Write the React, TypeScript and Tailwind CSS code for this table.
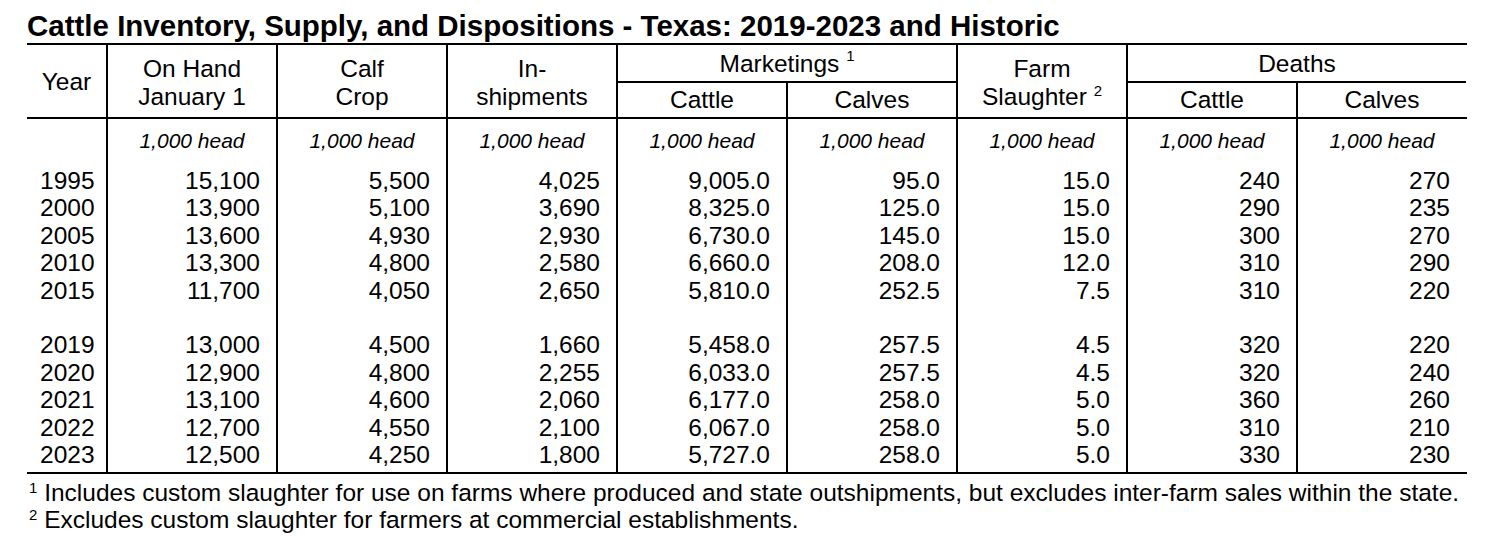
import React from "react";

const grid = "grid w-[1440px] grid-cols-[79px_repeat(8,170px)]";

type Row = [string, string, string, string, string, string, string, string, string] | null;

const rows: Row[] = [
  ["1995", "15,100", "5,500", "4,025", "9,005.0", "95.0", "15.0", "240", "270"],
  ["2000", "13,900", "5,100", "3,690", "8,325.0", "125.0", "15.0", "290", "235"],
  ["2005", "13,600", "4,930", "2,930", "6,730.0", "145.0", "15.0", "300", "270"],
  ["2010", "13,300", "4,800", "2,580", "6,660.0", "208.0", "12.0", "310", "290"],
  ["2015", "11,700", "4,050", "2,650", "5,810.0", "252.5", "7.5", "310", "220"],
  null,
  ["2019", "13,000", "4,500", "1,660", "5,458.0", "257.5", "4.5", "320", "220"],
  ["2020", "12,900", "4,800", "2,255", "6,033.0", "257.5", "4.5", "320", "240"],
  ["2021", "13,100", "4,600", "2,060", "6,177.0", "258.0", "5.0", "360", "260"],
  ["2022", "12,700", "4,550", "2,100", "6,067.0", "258.0", "5.0", "310", "210"],
  ["2023", "12,500", "4,250", "1,800", "5,727.0", "258.0", "5.0", "330", "230"],
];

function TwoLine({ top, bottom }: { top: React.ReactNode; bottom: React.ReactNode }) {
  return (
    <div className="row-span-2 flex flex-col items-center justify-center border-l-2 border-black pt-[3px] leading-[28px]">
      <span>{top}</span>
      <span>{bottom}</span>
    </div>
  );
}

export default function App() {
  return (
    <div className="min-h-[550px] w-[1496px] bg-white pl-[27px] font-['Liberation_Sans',Arial,sans-serif] text-[24.5px] text-black">
      <h1 className="pt-[9px] text-[29.5px] font-bold leading-[34px]">
        Cattle Inventory, Supply, and Dispositions - Texas: 2019-2023 and Historic
      </h1>

      {/* Column headings */}
      <div className={`${grid} grid-rows-[38px_34px] border-y-2 border-black`}>
        <div className="row-span-2 flex items-center justify-center pt-[2px]">Year</div>
        <TwoLine top="On Hand" bottom="January 1" />
        <TwoLine top="Calf" bottom="Crop" />
        <TwoLine top="In-" bottom="shipments" />
        <div className="col-span-2 flex items-center justify-center border-b-2 border-l-2 border-black pt-[3px]">
          Marketings&nbsp;<sup className="top-[-0.6em] text-[15px]">1</sup>
        </div>
        <TwoLine
          top="Farm"
          bottom={
            <>
              Slaughter <sup className="top-[-0.6em] text-[15px]">2</sup>
            </>
          }
        />
        <div className="col-span-2 flex items-center justify-center border-b-2 border-l-2 border-black pt-[3px]">
          Deaths
        </div>
        <div className="col-start-5 flex items-center justify-center border-l-2 border-black">Cattle</div>
        <div className="flex items-center justify-center border-l-2 border-black">Calves</div>
        <div className="col-start-8 flex items-center justify-center border-l-2 border-black">Cattle</div>
        <div className="flex items-center justify-center border-l-2 border-black">Calves</div>
      </div>

      {/* Units and data */}
      <div className={`${grid} border-b-2 border-black`}>
        <div className="h-[48px]" />
        {Array.from({ length: 8 }).map((_, i) => (
          <div
            key={i}
            className="h-[48px] border-l-2 border-black pt-[9px] text-center text-[21px] italic leading-[26px]"
          >
            1,000 head
          </div>
        ))}

        {rows.map((row, r) => {
          const last = r === rows.length - 1;
          return Array.from({ length: 9 }).map((_, c) => (
            <div
              key={`${r}-${c}`}
              className={
                (last ? "h-[31.4px] pb-[4px] " : "h-[27.4px] ") +
                "leading-[27.4px] " +
                (c === 0 ? "pl-[13px] text-left" : "border-l-2 border-black pr-[16px] text-right")
              }
            >
              {row ? row[c] : ""}
            </div>
          ));
        })}
      </div>

      {/* Footnotes */}
      <div className="pt-[5px] leading-[27px]">
        <p>
          <sup className="top-[-0.55em] pl-[2px] text-[15px]">1</sup> Includes custom slaughter for use on farms where
          produced and state outshipments, but excludes inter-farm sales within the state.
        </p>
        <p>
          <sup className="top-[-0.55em] pl-[2px] text-[15px]">2</sup> Excludes custom slaughter for farmers at commercial
          establishments.
        </p>
      </div>
    </div>
  );
}
